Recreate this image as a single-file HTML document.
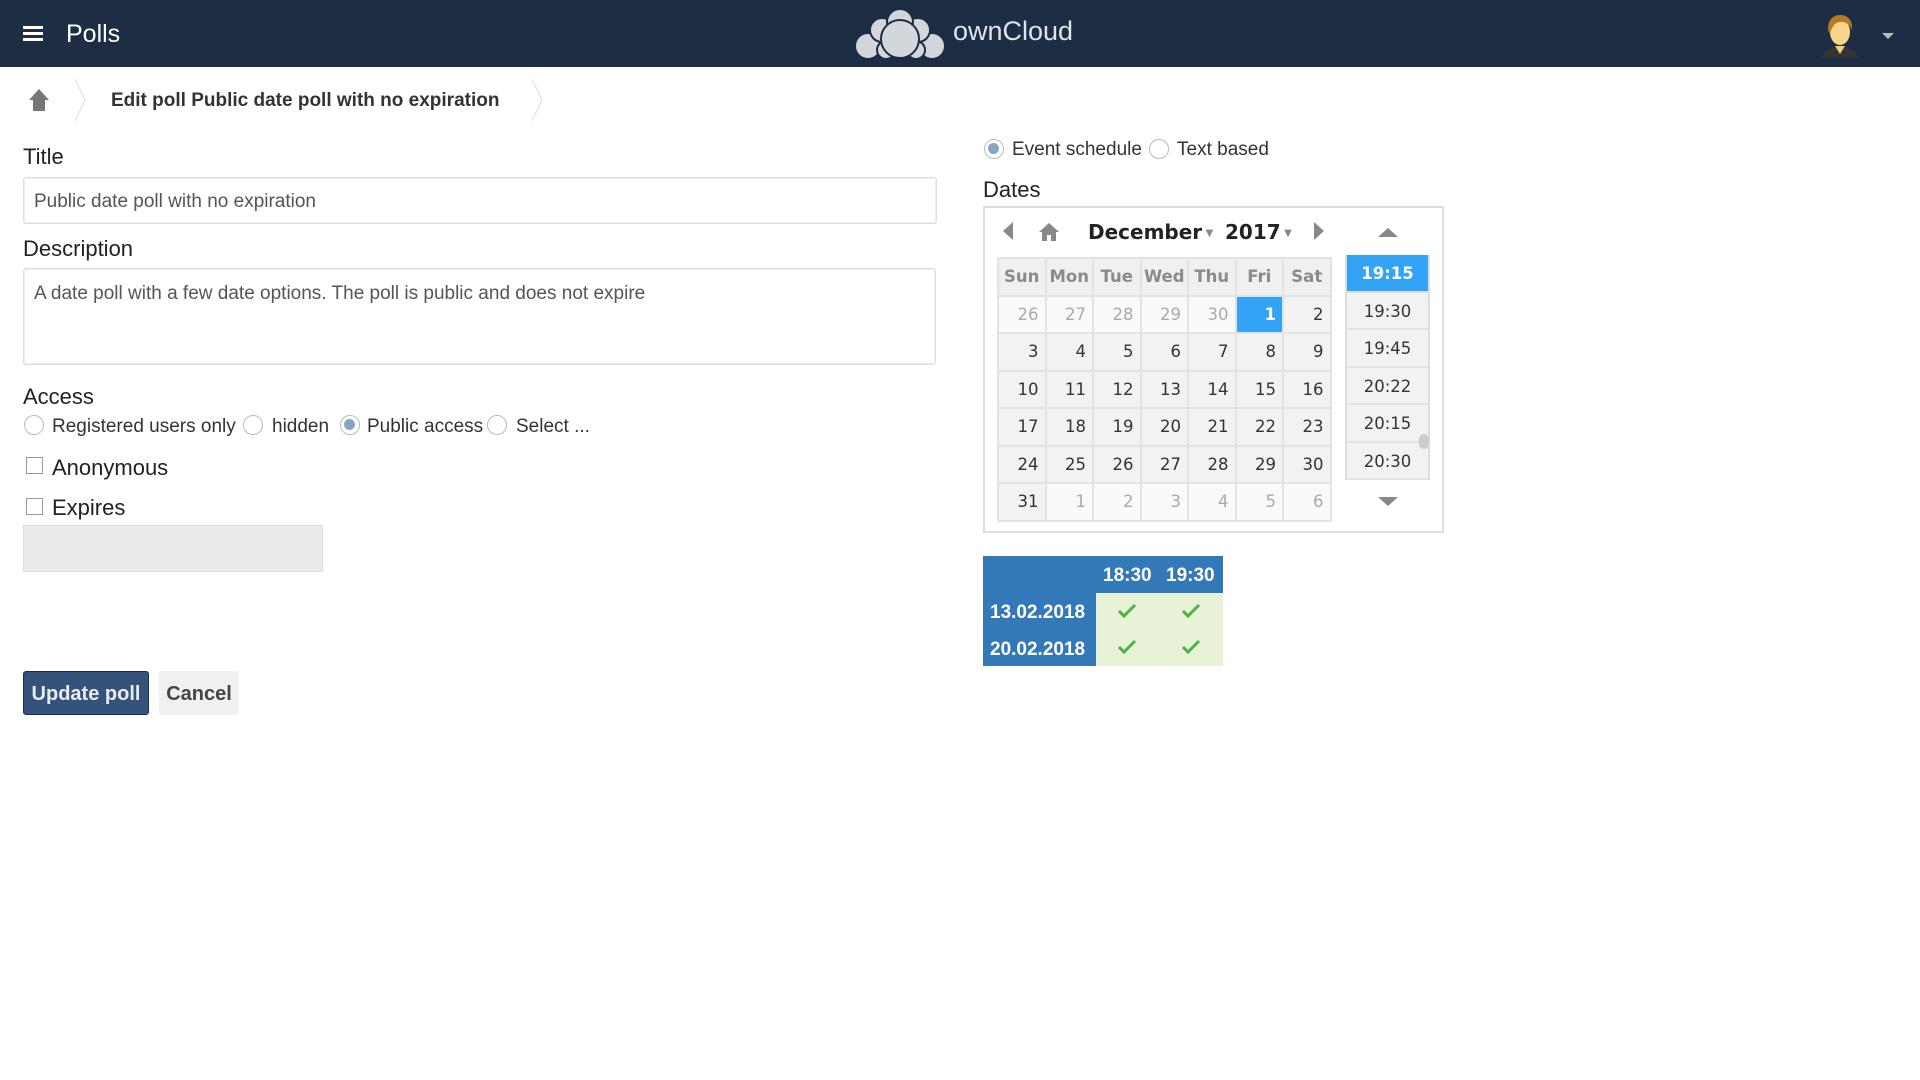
<!DOCTYPE html>
<html><head><meta charset="utf-8"><style>
*{box-sizing:border-box;margin:0;padding:0}
body{width:1920px;height:1080px;background:#fff;font-family:"Liberation Sans",sans-serif;color:#222;position:relative;overflow:hidden}
.a{position:absolute}
.hdr{left:0;top:0;width:1920px;height:67px;background:#1d2d44}
.lbl{font-size:22px;color:#222;left:23px}
.inp{border:1px solid #ddd;border-radius:3px;box-shadow:0 0 0 1px #eee inset;background:#fff;color:#555;font-size:19px;padding-left:10px}
.rad{width:20px;height:20px;border:1.5px solid #bbb;border-radius:50%;background:#fff}
.rad.on::after{content:"";position:absolute;left:3px;top:3px;width:11px;height:11px;border-radius:50%;background:#8aa4c6}
.chk{width:17px;height:17px;border:1.5px solid #999;background:#fff}
.t19{font-size:19px;color:#333}
.cal{font-family:"DejaVu Sans",sans-serif}
.grid{left:997px;top:257px;border-collapse:collapse;font-family:"DejaVu Sans",sans-serif}
.grid td{width:47.5px;height:37.5px;border:2px solid #e3e3e3;text-align:right;padding-right:6px;font-size:16.5px;color:#333;background:#f2f2f2}
.grid th{width:47.5px;height:37.5px;border:2px solid #e3e3e3;font-size:16.5px;color:#8b8b8b;background:#f0f0f0;text-align:center}
.grid td.o{color:#aaa;background:#f9f9f9}
.grid td.s{background:#33a3f5;color:#fff;font-weight:bold}
.tm{left:1345px;width:85px;height:37.5px;border-bottom:2px solid #e3e3e3;border-left:2px solid #ddd;border-right:2px solid #ddd;background:#f2f2f2;text-align:center;font-size:16.5px;line-height:37px;color:#333;font-family:"DejaVu Sans",sans-serif}
</style></head><body>
<div class="a hdr"></div>
<div class="a" style="left:23px;top:26px;width:20px;height:3px;background:#fff;box-shadow:0 6px 0 #fff,0 12px 0 #fff"></div>
<div class="a" style="left:66px;top:20px;font-size:25px;color:#fff">Polls</div>
<svg class="a" style="left:852px;top:8px" width="96" height="52" viewBox="0 0 96 52">
<g fill="#d3d6db" stroke="#1d2d44" stroke-width="2">
<circle cx="16" cy="38" r="13"/><circle cx="80" cy="38" r="13"/><circle cx="30" cy="22" r="12"/><circle cx="66" cy="22" r="12"/><circle cx="48" cy="14" r="13"/><circle cx="34" cy="42" r="9"/><circle cx="64" cy="42" r="9"/><circle cx="48" cy="31" r="19"/></g></svg>
<div class="a" style="left:953px;top:16px;font-size:27px;color:#dde3ea">ownCloud</div>
<svg class="a" style="left:1818px;top:10px" width="44" height="50" viewBox="0 0 44 50">
<path d="M4 48 Q6 38 22 36 Q38 38 40 48Z" fill="#333"/><path d="M17 36 L22 44 L27 36Z" fill="#f3d17a"/>
<ellipse cx="22" cy="22" rx="10" ry="13" fill="#f7d58a"/><path d="M10 20 Q10 4 24 5 Q35 7 34 20 Q30 11 22 12 Q15 12 12 24Z" fill="#b37a25"/></svg>
<div class="a" style="left:1882px;top:33px;border-left:6px solid transparent;border-right:6px solid transparent;border-top:6px solid #bbb"></div>

<svg class="a" style="left:28px;top:88px" width="22" height="24" viewBox="0 0 22 24"><path d="M11 1 L21 12 H17 V23 H5 V12 H1Z" fill="#777"/></svg>
<svg class="a" style="left:73px;top:78px" width="14" height="44"><path d="M2 1 L12 22 L2 43" stroke="#ddd" fill="none"/></svg>
<div class="a" style="left:111px;top:90px;font-size:19px;font-weight:bold;color:#333">Edit poll Public date poll with no expiration</div>
<svg class="a" style="left:530px;top:78px" width="14" height="44"><path d="M2 1 L12 22 L2 43" stroke="#ddd" fill="none"/></svg>

<div class="a lbl" style="top:144px">Title</div>
<div class="a inp" style="left:23px;top:177px;width:914px;height:47px;line-height:47px">Public date poll with no expiration</div>
<div class="a lbl" style="top:236px">Description</div>
<div class="a inp" style="left:23px;top:268px;width:913px;height:97px;padding-top:14px">A date poll with a few date options. The poll is public and does not expire</div>
<div class="a lbl" style="top:384px">Access</div>
<div class="a rad" style="left:24px;top:415px"></div><div class="a t19" style="left:52px;top:416px">Registered users only</div>
<div class="a rad" style="left:243px;top:415px"></div><div class="a t19" style="left:272px;top:416px">hidden</div>
<div class="a rad on" style="left:340px;top:415px"></div><div class="a t19" style="left:367px;top:416px">Public access</div>
<div class="a rad" style="left:487px;top:415px"></div><div class="a t19" style="left:516px;top:416px">Select ...</div>
<div class="a chk" style="left:26px;top:457px"></div><div class="a" style="left:52px;top:455px;font-size:22px">Anonymous</div>
<div class="a chk" style="left:26px;top:498px"></div><div class="a" style="left:52px;top:495px;font-size:22px">Expires</div>
<div class="a" style="left:23px;top:525px;width:300px;height:47px;background:#ebebeb;border:1px solid #ddd"></div>
<div class="a" style="left:23px;top:671px;width:126px;height:44px;background:#35537a;border:1px solid #1d2d44;border-radius:3px;color:#e6ecf3;font-size:20px;font-weight:bold;text-align:center;line-height:44px">Update poll</div>
<div class="a" style="left:159px;top:671px;width:80px;height:44px;background:#f0f0f0;border-radius:3px;color:#444;font-size:20px;font-weight:bold;text-align:center;line-height:46px">Cancel</div>

<div class="a rad on" style="left:984px;top:139px"></div><div class="a t19" style="left:1012px;top:139px">Event schedule</div>
<div class="a rad" style="left:1149px;top:139px"></div><div class="a t19" style="left:1177px;top:139px">Text based</div>
<div class="a lbl" style="left:983px;top:177px">Dates</div>
<div class="a" style="left:983px;top:206px;width:461px;height:327px;border:2px solid #ddd"></div>
<div class="a" style="left:1003px;top:222px;border-top:9px solid transparent;border-bottom:9px solid transparent;border-right:10px solid #888"></div>
<svg class="a" style="left:1038px;top:222px" width="22" height="20"><path d="M11 1 L21 10 H18 V19 H13 V13 H9 V19 H4 V10 H1Z" fill="#888"/></svg>
<div class="a cal" style="left:1088px;top:220px;font-size:20px;font-weight:bold;color:#222">December<span style="font-size:10px;color:#888;vertical-align:middle"> ▼</span></div>
<div class="a cal" style="left:1225px;top:220px;font-size:20px;font-weight:bold;color:#222">2017<span style="font-size:10px;color:#888;vertical-align:middle"> ▼</span></div>
<div class="a" style="left:1314px;top:222px;border-top:9px solid transparent;border-bottom:9px solid transparent;border-left:10px solid #888"></div>
<div class="a" style="left:1378px;top:228px;border-left:10px solid transparent;border-right:10px solid transparent;border-bottom:9px solid #888"></div>
<table class="a grid">
<tr><th>Sun</th><th>Mon</th><th>Tue</th><th>Wed</th><th>Thu</th><th>Fri</th><th>Sat</th></tr>
<tr><td class="o">26</td><td class="o">27</td><td class="o">28</td><td class="o">29</td><td class="o">30</td><td class="s">1</td><td>2</td></tr>
<tr><td>3</td><td>4</td><td>5</td><td>6</td><td>7</td><td>8</td><td>9</td></tr>
<tr><td>10</td><td>11</td><td>12</td><td>13</td><td>14</td><td>15</td><td>16</td></tr>
<tr><td>17</td><td>18</td><td>19</td><td>20</td><td>21</td><td>22</td><td>23</td></tr>
<tr><td>24</td><td>25</td><td>26</td><td>27</td><td>28</td><td>29</td><td>30</td></tr>
<tr><td>31</td><td class="o">1</td><td class="o">2</td><td class="o">3</td><td class="o">4</td><td class="o">5</td><td class="o">6</td></tr>
</table>
<div class="a tm" style="top:255px;background:#33a3f5;color:#fff;font-weight:bold;border-color:#ddd">19:15</div>
<div class="a tm" style="top:292.5px">19:30</div>
<div class="a tm" style="top:330px">19:45</div>
<div class="a tm" style="top:367.5px">20:22</div>
<div class="a tm" style="top:405px">20:15</div>
<div class="a tm" style="top:442.5px">20:30</div>
<div class="a" style="left:1419px;top:434px;width:10px;height:15px;border-radius:5px;background:#ccc"></div>
<div class="a" style="left:1378px;top:497px;border-left:10px solid transparent;border-right:10px solid transparent;border-top:9px solid #888"></div>

<div class="a" style="left:983px;top:556px;width:240px;height:110px;background:#3479b7"></div>
<div class="a" style="left:1096px;top:593px;width:127px;height:73px;background:#e8f2d6"></div>
<div class="a" style="left:1103px;top:565px;font-size:19px;font-weight:bold;color:#fff">18:30</div>
<div class="a" style="left:1166px;top:565px;font-size:19px;font-weight:bold;color:#fff">19:30</div>
<div class="a" style="left:990px;top:602px;font-size:19px;font-weight:bold;color:#fff">13.02.2018</div>
<div class="a" style="left:990px;top:639px;font-size:19px;font-weight:bold;color:#fff">20.02.2018</div>
<svg class="a" style="left:1117px;top:603px" width="20" height="16"><path d="M2 8 L7 13 L18 2" stroke="#49b34a" stroke-width="3" fill="none"/></svg>
<svg class="a" style="left:1181px;top:603px" width="20" height="16"><path d="M2 8 L7 13 L18 2" stroke="#49b34a" stroke-width="3" fill="none"/></svg>
<svg class="a" style="left:1117px;top:639px" width="20" height="16"><path d="M2 8 L7 13 L18 2" stroke="#49b34a" stroke-width="3" fill="none"/></svg>
<svg class="a" style="left:1181px;top:639px" width="20" height="16"><path d="M2 8 L7 13 L18 2" stroke="#49b34a" stroke-width="3" fill="none"/></svg>
</body></html>
